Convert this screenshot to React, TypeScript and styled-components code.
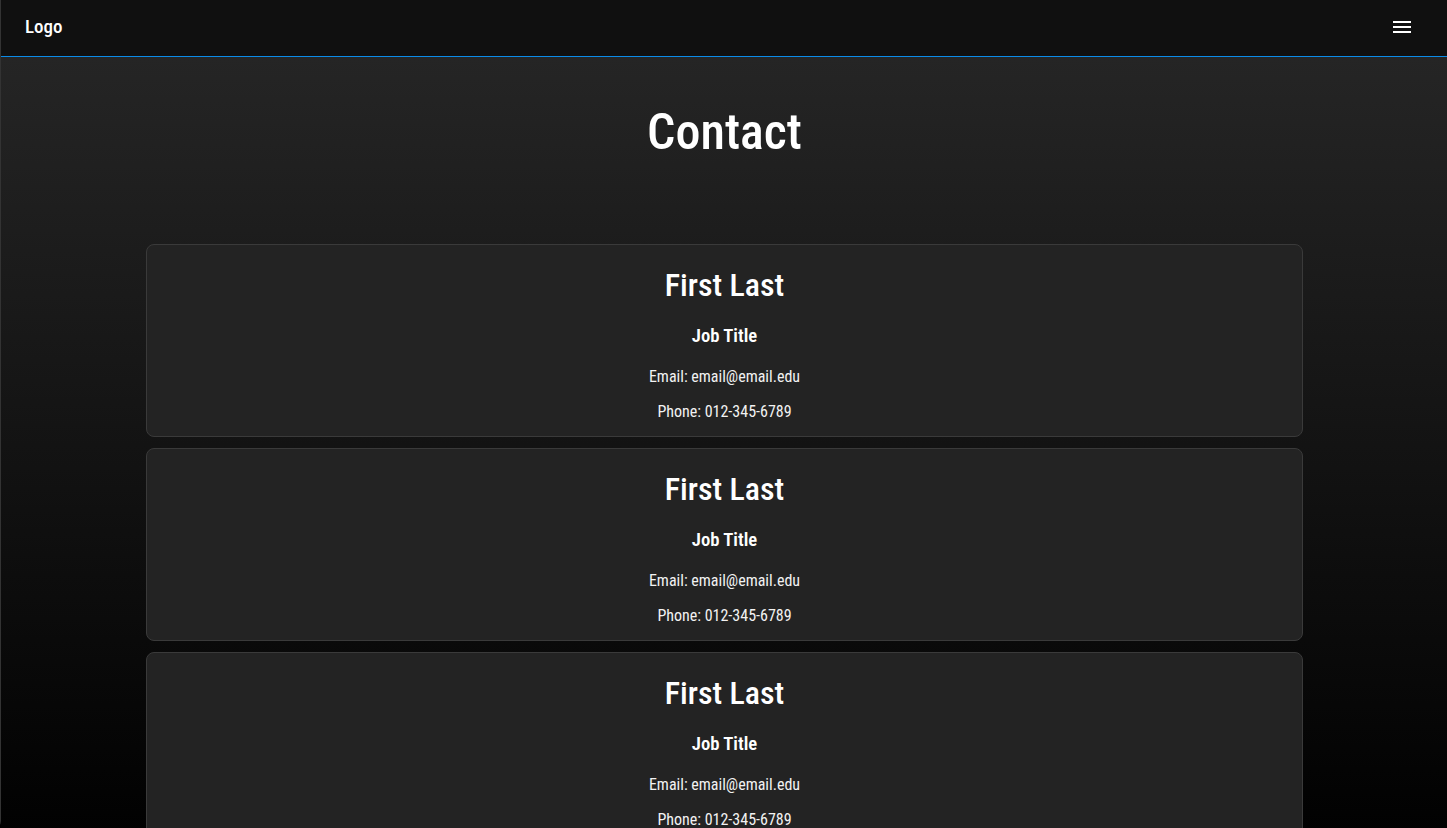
import React from "react";
import styled, { createGlobalStyle } from "styled-components";

const GlobalStyle = createGlobalStyle`
  html {
    overflow-x: hidden;
  }
  body {
    margin: 0;
    background: #000;
    font-family: "Roboto Condensed", Roboto, "Liberation Sans", sans-serif;
    font-stretch: condensed;
    color: #fff;
  }
`;

const Frame = styled.div`
  box-sizing: content-box;
  width: 100vw;
  height: 100vh;
  border: 1px solid #333;
  border-top: none;
  border-radius: 0 0 8px 8px;
  display: flex;
  flex-direction: column;
`;

const Header = styled.header`
  flex: none;
  height: 54px;
  padding: 0 26px 2px 24px;
  background: #101010;
  border-bottom: 1px solid #0b8be8;
  display: flex;
  align-items: center;
  justify-content: space-between;
`;

const Logo = styled.div`
  font-size: 19px;
  font-weight: 500;
  line-height: 24px;
  color: #fff;
`;

const MenuButton = styled.button`
  display: flex;
  padding: 8px;
  margin: 0;
  border: none;
  background: transparent;
  color: #fff;
  cursor: pointer;
`;

const Main = styled.main`
  flex: 1;
  background: linear-gradient(to bottom, #252525, #000);
  padding-top: 47px;
  text-align: center;
`;

const Title = styled.h1`
  margin: 0;
  font-size: 50px;
  line-height: 56px;
  font-weight: 500;
`;

const CardList = styled.section`
  width: 80%;
  margin: 84px auto 0;
  display: flex;
  flex-direction: column;
  gap: 11px;
  padding-bottom: 11px;
`;

const Card = styled.article`
  background: #232323;
  border: 1px solid #3a3a3a;
  border-radius: 8px;
  padding: 21px 16px 15px;
`;

const Name = styled.h2`
  margin: 0;
  font-size: 32px;
  line-height: 38px;
  font-weight: 500;
`;

const JobTitle = styled.h3`
  margin: 20px 0 19px;
  font-size: 18.72px;
  line-height: 24px;
  font-weight: 600;
`;

const Detail = styled.p<{ $last?: boolean }>`
  margin: 0 0 ${(p) => (p.$last ? "0" : "16px")};
  font-size: 16px;
  line-height: 19px;
  color: #f2f2f2;
`;

const MenuIcon = () => (
  <svg width="24" height="24" viewBox="0 0 24 24" fill="currentColor">
    <path d="M3 18h18v-2H3v2zm0-5h18v-2H3v2zm0-7v2h18V6H3z" />
  </svg>
);

const contacts = [
  { name: "First Last", title: "Job Title", email: "email@email.edu", phone: "012-345-6789" },
  { name: "First Last", title: "Job Title", email: "email@email.edu", phone: "012-345-6789" },
  { name: "First Last", title: "Job Title", email: "email@email.edu", phone: "012-345-6789" },
];

export default function App() {
  return (
    <>
      <GlobalStyle />
      <Frame>
        <Header>
          <Logo>Logo</Logo>
          <MenuButton aria-label="menu">
            <MenuIcon />
          </MenuButton>
        </Header>
        <Main>
          <Title>Contact</Title>
          <CardList>
            {contacts.map((c, i) => (
              <Card key={i}>
                <Name>{c.name}</Name>
                <JobTitle>{c.title}</JobTitle>
                <Detail>Email: {c.email}</Detail>
                <Detail $last>Phone: {c.phone}</Detail>
              </Card>
            ))}
          </CardList>
        </Main>
      </Frame>
    </>
  );
}
